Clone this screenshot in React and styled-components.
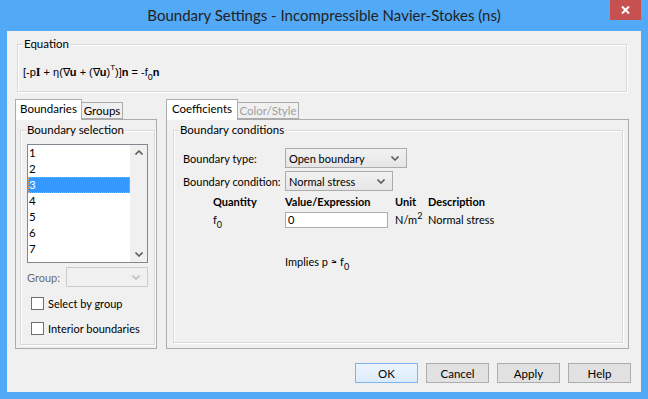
import styled, { createGlobalStyle } from "styled-components";

const Global = createGlobalStyle`
  html, body { margin: 0; padding: 0; }
  body {
    font-family: Lato, "Noto Sans", sans-serif;
    font-size: 11px;
    color: #000;
  }
  sub, sup { line-height: 0; vertical-align: baseline; position: relative; }
`;

const Frame = styled.div`
  width: 648px;
  height: 399px;
  background: #52a9f6;
  display: flex;
  flex-direction: column;
  box-sizing: border-box;
  padding: 0 7px 7px 7px;
`;

const TitleBar = styled.div`
  height: 31px;
  display: flex;
  align-items: center;
  justify-content: center;
  position: relative;
  font-size: 15px;
  color: #222;
  padding-bottom: 1px;
  box-sizing: border-box;
`;

const CloseBtn = styled.div`
  position: absolute;
  right: 0;
  top: 0;
  width: 31px;
  height: 20px;
  background: #c75050;
  display: flex;
  align-items: center;
  justify-content: center;
`;

const Client = styled.div`
  flex: 1;
  background: #f0f0f0;
  display: flex;
  flex-direction: column;
  padding-top: 13px;
  white-space: nowrap;
`;

const Group = styled.div`
  position: relative;
  box-sizing: border-box;
  border: 1px solid #d8d8d8;
  box-shadow: inset 1px 1px 0 #fff, 1px 1px 0 #fff;
  margin-left: ${(p) => p.left || 0}px;
  margin-top: ${(p) => p.top || 0}px;
  width: ${(p) => p.w}px;
  height: ${(p) => p.h}px;
`;

const Caption = styled.span`
  position: absolute;
  left: 5px;
  top: -9px;
  padding: 0 1px;
  background: #f0f0f0;
  line-height: 16px;
  font-size: 11.5px;
`;

const EquationText = styled.div`
  position: absolute;
  left: 5px;
  top: 20px;
  font-family: "Liberation Sans", Arial, sans-serif;
  font-size: 11px;
  b { font-weight: bold; }
  .ser { font-family: "Liberation Serif", serif; font-weight: bold; font-size: 12px; }
  sup { font-size: 8px; top: -6px; }
  sub { font-size: 9px; top: 4px; }
`;

const Middle = styled.div`
  display: flex;
  margin-top: 7px;
  gap: 9px;
  padding-left: 8px;
`;

const TabControl = styled.div`
  width: ${(p) => p.w}px;
  display: flex;
  flex-direction: column;
`;

const TabStrip = styled.div`
  height: 20px;
  display: flex;
  align-items: flex-end;
  position: relative;
  z-index: 1;
`;

const Tab = styled.div`
  box-sizing: border-box;
  width: ${(p) => p.w}px;
  height: ${(p) => (p.active ? 21 : 17)}px;
  margin-bottom: ${(p) => (p.active ? -1 : 0)}px;
  border: 1px solid #acacac;
  border-bottom: ${(p) => (p.active ? "none" : "1px solid #acacac")};
  border-left: ${(p) => (p.joined ? "none" : "1px solid #acacac")};
  background: ${(p) => (p.active ? "#fff" : "#f0f0f0")};
  color: ${(p) => (p.disabled ? "#a0a0a0" : "#000")};
  line-height: ${(p) => (p.active ? 17 : 15)}px;
  font-size: 11.5px;
  text-align: center;
`;

const TabPanel = styled.div`
  box-sizing: border-box;
  height: 230px;
  border: 1px solid #acacac;
  background: #f0f0f0;
  padding: 10px 0 0 ${(p) => p.pad}px;
`;

const ListBox = styled.div`
  margin: 13px 0 0 6px;
  width: 121px;
  height: 119px;
  box-sizing: border-box;
  border: 1px solid #828790;
  background: #fff;
  display: flex;
  overflow: hidden;
`;

const Items = styled.div`
  flex: 1;
  display: flex;
  flex-direction: column;
`;

const Item = styled.div`
  height: 16px;
  line-height: 16px;
  padding-left: 1px;
  box-sizing: border-box;
  font-size: 11.5px;
  background: ${(p) => (p.selected ? "#3399ff" : "transparent")};
  color: ${(p) => (p.selected ? "#fff" : "#000")};
  outline: ${(p) => (p.selected ? "1px dotted #ff9f3f" : "none")};
  outline-offset: -1px;
`;

const ScrollBar = styled.div`
  width: 17px;
  background: #f0f0f0;
  display: flex;
  flex-direction: column;
  justify-content: space-between;
  align-items: center;
  padding: 5px 0;
`;

const FieldRow = styled.div`
  display: flex;
  align-items: center;
  margin-top: ${(p) => p.top || 0}px;
  padding-left: ${(p) => p.left || 0}px;
`;

const FieldLabel = styled.span`
  width: ${(p) => p.w}px;
  color: ${(p) => (p.dim ? "#6d6d6d" : "#000")};
`;

const Combo = styled.div`
  box-sizing: border-box;
  width: ${(p) => p.w}px;
  height: ${(p) => p.h || 20}px;
  border: 1px solid ${(p) => (p.disabled ? "#cccccc" : "#acacac")};
  background: ${(p) => (p.disabled ? "#f0f0f0" : "linear-gradient(#f2f2f2, #e5e5e5)")};
  display: flex;
  align-items: center;
  justify-content: space-between;
  padding: 0 7px 0 3px;
`;

const CheckRow = styled.div`
  display: flex;
  align-items: center;
  gap: 4px;
  margin: ${(p) => p.top}px 0 0 10px;
`;

const Box = styled.span`
  width: 13px;
  height: 13px;
  box-sizing: border-box;
  border: 1px solid #707070;
  background: #fff;
`;

const Grid = styled.div`
  display: grid;
  grid-template-columns: 72px 110px 33px auto;
  margin: 2px 0 0 39px;
  align-items: center;
`;

const Head = styled.span`
  font-weight: bold;
  height: 18px;
  line-height: 18px;
`;

const Cell = styled.span`
  height: 18px;
  line-height: 18px;
  align-self: start;
  sub { font-size: 9px; top: 4px; }
  sup { font-size: 9px; top: -5px; }
`;

const TextInput = styled.div`
  box-sizing: border-box;
  width: 103px;
  height: 16px;
  border: 1px solid #acacac;
  background: #fff;
  line-height: 14px;
  padding-left: 2px;
  align-self: start;
  margin-top: 1px;
`;

const Implies = styled.div`
  margin: 26px 0 0 111px;
  sub { font-size: 9px; top: 4px; }
`;

const ButtonRow = styled.div`
  display: flex;
  justify-content: flex-end;
  gap: 8px;
  margin: 14px 10px 0 0;
  font-size: 11.5px;
`;

const Button = styled.div`
  box-sizing: border-box;
  width: 63px;
  height: 20px;
  display: flex;
  align-items: center;
  justify-content: center;
  border: 1px solid ${(p) => (p.primary ? "#7eb4ea" : "#adadad")};
  background: ${(p) => (p.primary ? "linear-gradient(#ecf4fc, #dcecfc)" : "#e1e1e1")};
`;

const Chevron = ({ down = true, color = "#606060" }) => (
  <svg width="8" height="5" viewBox="0 0 8 5">
    <path
      d={down ? "M0.5 0.5 L4 4 L7.5 0.5" : "M0.5 4.5 L4 1 L7.5 4.5"}
      fill="none"
      stroke={color}
      strokeWidth="1.6"
    />
  </svg>
);

export default function App() {
  return (
    <>
      <Global />
      <Frame>
        <TitleBar>
          Boundary Settings - Incompressible Navier-Stokes (ns)
          <CloseBtn>
            <svg width="9" height="8" viewBox="0 0 9 8">
              <path d="M1 0.5 L8 7.5 M8 0.5 L1 7.5" stroke="#fff" strokeWidth="2" />
            </svg>
          </CloseBtn>
        </TitleBar>
        <Client>
          <Group left={10} w={610} h={48}>
            <Caption>Equation</Caption>
            <EquationText>
              [-p<span className="ser">I</span> + η(∇<b>u</b> + (∇<b>u</b>)<sup>T</sup>)]<b>n</b> = -f<sub>0</sub><b>n</b>
            </EquationText>
          </Group>

          <Middle>
            <TabControl w={142}>
              <TabStrip>
                <Tab active w={67}>Boundaries</Tab>
                <Tab joined w={41}>Groups</Tab>
              </TabStrip>
              <TabPanel pad={4}>
                <Group w={135} h={215}>
                  <Caption>Boundary selection</Caption>
                  <ListBox>
                    <Items>
                      {[1, 2, 3, 4, 5, 6, 7].map((n) => (
                        <Item key={n} selected={n === 3}>
                          {n}
                        </Item>
                      ))}
                    </Items>
                    <ScrollBar>
                      <Chevron down={false} />
                      <Chevron />
                    </ScrollBar>
                  </ListBox>
                  <FieldRow top={4} left={6}>
                    <FieldLabel w={39} dim>
                      Group:
                    </FieldLabel>
                    <Combo w={82} disabled>
                      <span />
                      <Chevron color="#bcbcbc" />
                    </Combo>
                  </FieldRow>
                  <CheckRow top={10}>
                    <Box />
                    Select by group
                  </CheckRow>
                  <CheckRow top={12}>
                    <Box />
                    Interior boundaries
                  </CheckRow>
                </Group>
              </TabPanel>
            </TabControl>

            <TabControl w={463}>
              <TabStrip>
                <Tab active w={72}>Coefficients</Tab>
                <Tab joined disabled w={61}>
                  Color/Style
                </Tab>
              </TabStrip>
              <TabPanel pad={6}>
                <Group w={450} h={213}>
                  <Caption>Boundary conditions</Caption>
                  <FieldRow top={17} left={9}>
                    <FieldLabel w={102}>Boundary type:</FieldLabel>
                    <Combo w={122} h={20}>
                      Open boundary
                      <Chevron />
                    </Combo>
                  </FieldRow>
                  <FieldRow top={3} left={9}>
                    <FieldLabel w={102}>Boundary condition:</FieldLabel>
                    <Combo w={108} h={20}>
                      Normal stress
                      <Chevron />
                    </Combo>
                  </FieldRow>
                  <Grid>
                    <Head>Quantity</Head>
                    <Head>Value/Expression</Head>
                    <Head>Unit</Head>
                    <Head>Description</Head>
                    <Cell>
                      f<sub>0</sub>
                    </Cell>
                    <TextInput>0</TextInput>
                    <Cell>
                      N/m<sup>2</sup>
                    </Cell>
                    <Cell>Normal stress</Cell>
                  </Grid>
                  <Implies>
                    Implies p ≈ f<sub>0</sub>
                  </Implies>
                </Group>
              </TabPanel>
            </TabControl>
          </Middle>

          <ButtonRow>
            <Button primary>OK</Button>
            <Button>Cancel</Button>
            <Button>Apply</Button>
            <Button>Help</Button>
          </ButtonRow>
        </Client>
      </Frame>
    </>
  );
}
